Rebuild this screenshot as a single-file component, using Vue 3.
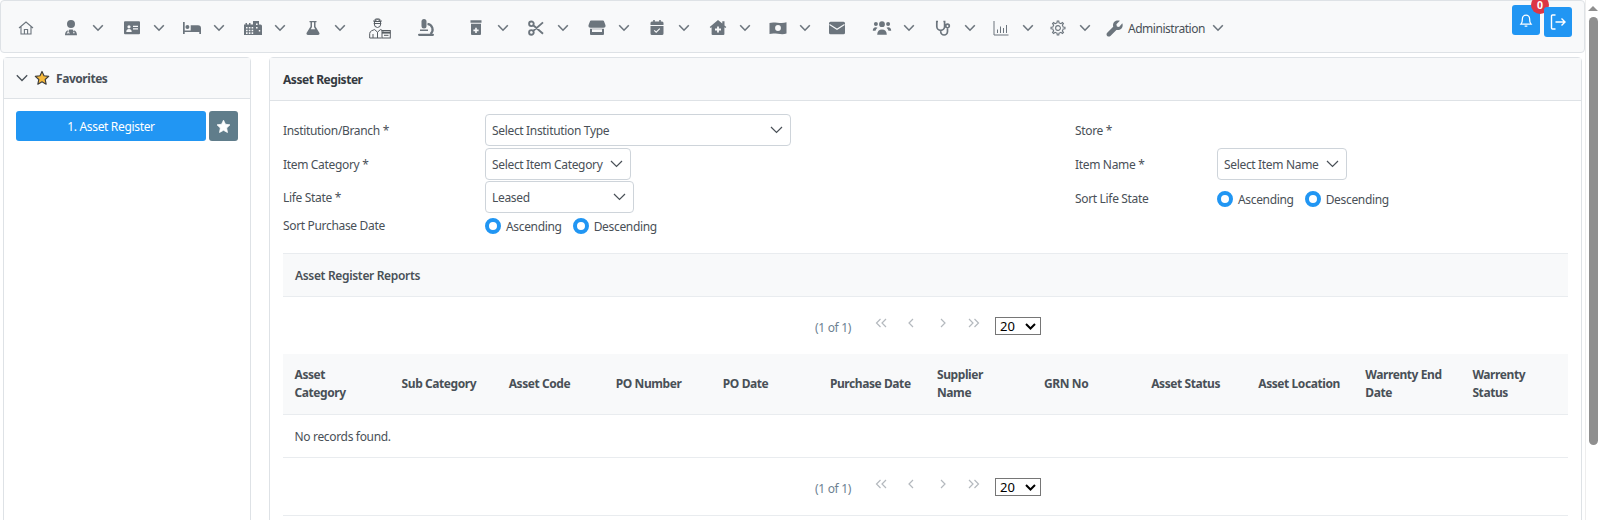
<script setup>
// little helpers for the hand drawn icons
const dot = (x, y, r) => `M${x - r} ${y}a${r} ${r} 0 1 0 ${2 * r} 0a${r} ${r} 0 1 0 ${-2 * r} 0z`
const box = (x, y, w, h) => `M${x} ${y}h${w}v${h}h${-w}z`

function gear(cx, cy, outer, inner, teeth) {
  const pts = []
  for (let i = 0; i < teeth; i++) {
    const a = (i / teeth) * Math.PI * 2
    const step = (Math.PI * 2) / teeth
    const ring = [
      [inner, a - step * 0.5],
      [inner, a - step * 0.24],
      [outer, a - step * 0.14],
      [outer, a + step * 0.14],
      [inner, a + step * 0.24]
    ]
    ring.forEach(([r, t]) => pts.push(`${(cx + r * Math.sin(t)).toFixed(2)} ${(cy - r * Math.cos(t)).toFixed(2)}`))
  }
  return 'M' + pts.join('L') + 'z'
}

// f = filled, s = grey stroke, w = white detail on top
const icons = {
  home: { s: 'M3 10l7-6 7 6M5 8.500V16h10V8.500M8.400 16v-4.500h3.200V16', sw: 1.1 },
  doctor: {
    f: dot(10, 6, 4) + 'M4 17.200c0-3.700 2.400-5.800 6-5.800s6 2.100 6 5.800z',
    w: 'M7.200 11.800v2M12.800 11.800v1.500M6.200 15.500a1 1 0 0 1 2 0M12 14.800h1.600'
  },
  card: {
    f: 'M3 3.200h14a1 1 0 0 1 1 1v11a1 1 0 0 1-1 1H3a1 1 0 0 1-1-1v-11a1 1 0 0 1 1-1z' +
      dot(7, 8.800, 1.600) + 'M4.300 14c0-2 1.100-2.900 2.700-2.900s2.700.9 2.700 2.900z' + box(11, 7.800, 5, 1.100) + box(11, 10.300, 5, 1.100)
  },
  bed: { f: 'M1 4h1.700v8.500h6V7.300H16a3 3 0 0 1 3 3V16h-1.700v-2H2.700v2H1z' + dot(5.400, 9, 2) },
  building: {
    f: 'M1 6.500h1.500V5H4v1.500h2V5h1.500v1.500H10V3h6v3.500h1.500a1.500 1.500 0 0 1 1.500 1.500v9H1z' +
      [3, 5.800, 8.600].map(x => [9, 11.700, 14.300].map(y => box(x, y, 1.600, 1.600)).join('')).join('') +
      box(13, 5.500, 1.600, 1.600) + box(13, 9, 1.600, 1.600) + box(15.800, 12, 1.400, 1.600)
  },
  flask: { f: 'M6.500 3h7v1.300h-1v4.300l3.800 6.200c.7 1.200-.1 2.200-1.300 2.200H5c-1.200 0-2-1-1.300-2.200l3.800-6.200V4.300h-1zM9 4.300v4.700l-1.200 2.200h4.400L11 9V4.300z' },
  bottle: { f: 'M4.500 2.200h11v2.600h-11zM5 5.800h10V16a1 1 0 0 1-1 1H6a1 1 0 0 1-1-1zM9.200 9.800v1.800H7.400v1.700h1.800v1.800h1.600v-1.800h1.800v-1.700h-1.800V9.800z' },
  scissors: {
    s: dot(5.400, 5.800, 2.300) + dot(5.400, 14.400, 2.300) + 'M7.300 7.300l9.700 8.500M7.300 12.900l9.700-8.500',
    sw: 1.9
  },
  store: {
    f: 'M4 2.500h12a1 1 0 0 1 .9.600l1.600 4.200a2.200 2.200 0 0 1-2.200 2.500H3.700a2.200 2.200 0 0 1-2.200-2.500l1.600-4.200a1 1 0 0 1 .9-.6zM3 10.800h14V16a1 1 0 0 1-1 1H4a1 1 0 0 1-1-1zM5 11.200v2.700h10v-2.700z'
  },
  calendar: {
    f: 'M6.200 2h1.600v1.600h4.400V2h1.600v1.600H15a1.500 1.500 0 0 1 1.500 1.500V7h-13V5.100A1.500 1.500 0 0 1 5 3.600h1.200zM3.500 8h13v7.500A1.500 1.500 0 0 1 15 17H5a1.500 1.500 0 0 1-1.500-1.500z',
    w: 'M7.200 12.300l2 1.900 3.600-3.600'
  },
  houseMed: {
    f: 'M10 2l4.300 3.600V3.200h2.200v4.300L18.300 9l-.9 1.100-1-.8V16a1 1 0 0 1-1 1H4.600a1 1 0 0 1-1-1V9.300l-1 .8L1.700 9zM9.100 8.500v2.100H7v1.800h2.100v2.100h1.800v-2.100H13v-1.800h-2.100V8.500z'
  },
  money: {
    f: 'M1.500 5c5-1.800 11 1.400 17-.7v11.200c-5.500 2-12-1.400-17 .6z' + dot(10, 10, 2.900),
    w: 'M4 7.500v.1M16 12.500v.1'
  },
  envelope: {
    f: 'M3.500 3.800h13A1.500 1.500 0 0 1 18 5.300v9.400a1.500 1.500 0 0 1-1.500 1.500h-13A1.500 1.500 0 0 1 2 14.700V5.300a1.500 1.500 0 0 1 1.500-1.500z',
    w: 'M2.500 6.500L10 11.300l7.500-4.800'
  },
  users: {
    f: dot(10, 6.200, 2.900) + dot(3.900, 6, 2) + dot(16.100, 6, 2) +
      'M5.200 16.800c0-3.600 1.900-5.400 4.800-5.400s4.800 1.800 4.800 5.400zM.8 12.800c0-2.400 1.100-3.600 3-3.600.7 0 1.200.2 1.700.5-1.100 1-1.800 2-2 3.100zM19.200 12.800c0-2.400-1.100-3.600-3-3.600-.7 0-1.200.2-1.700.5 1.100 1 1.800 2 2 3.100z'
  },
  stethoscope: {
    s: 'M5 3.500H3.800V8.500a3.900 3.900 0 0 0 7.800 0V3.500H10.400M7.700 12.400v1.200a3.400 3.400 0 0 0 6.800 0V10' + dot(14.500, 8, 1.800),
    sw: 1.700
  },
  chart: { s: 'M3 3v14h14.500M6.500 15v-3.500M9.500 15V8.500M12.500 15v-5M15.500 15V7', sw: 1 },
  gear: { s: gear(10, 10, 7, 5.200, 8) + dot(10, 10, 2.400), sw: 1.100 },
  wrench: {
    f: 'M17.300 5.200c.8 2 .4 4.100-1 5.500-1.300 1.300-3.200 1.700-4.900 1.200l-6 6c-.9.9-2.300.9-3.200 0-.9-.9-.9-2.300 0-3.200l6-6c-.5-1.700-.1-3.600 1.200-4.900 1.400-1.400 3.500-1.800 5.500-1L11.400 6.300l.5 2.200 2.200.5z'
  }
}

const menuSource = [
  { icon: 'home', at: 26 },
  { icon: 'doctor', at: 71, chev: true },
  { icon: 'card', at: 132, chev: true },
  { icon: 'bed', at: 192, chev: true },
  { icon: 'building', at: 253, chev: true },
  { icon: 'flask', at: 313, chev: true },
  { icon: 'staff', at: 380 },
  { icon: 'scope', at: 426 },
  { icon: 'bottle', at: 476, chev: true },
  { icon: 'scissors', at: 536, chev: true },
  { icon: 'store', at: 597, chev: true },
  { icon: 'calendar', at: 657, chev: true },
  { icon: 'houseMed', at: 718, chev: true },
  { icon: 'money', at: 778, chev: true },
  { icon: 'envelope', at: 837 },
  { icon: 'users', at: 882, chev: true },
  { icon: 'stethoscope', at: 943, chev: true },
  { icon: 'chart', at: 1001, chev: true },
  { icon: 'gear', at: 1058, chev: true },
  { icon: 'wrench', at: 1115 }
]

// each cell runs up to the next icon's centre
const menu = menuSource.slice(0, -1).map((m, i) => ({ ...m, width: menuSource[i + 1].at - m.at }))

const columns = [
  'Asset\nCategory', 'Sub Category', 'Asset Code', 'PO Number', 'PO Date', 'Purchase Date',
  'Supplier\nName', 'GRN No', 'Asset Status', 'Asset Location', 'Warrenty End\nDate', 'Warrenty\nStatus'
]
</script>

<template>
  <div class="page">
    <div class="content">
      <header class="topbar">
        <nav class="menu">
          <div v-for="m in menu" :key="m.icon" class="menu-item" :style="{ width: m.width + 'px' }">
            <span class="icon-cell">
              <svg v-if="m.icon === 'staff'" class="staff" width="22" height="22" viewBox="0 0 22 22" fill="none" stroke="#555b61" stroke-width="1">
                <ellipse cx="8.500" cy="6.500" rx="3.300" ry="4" />
                <path d="M4.800 4.500c0-3.600 7.400-3.600 7.400 0zM5 6.500h7" />
                <path d="M.7 21v-4.500c0-2.400 3-3.300 5-3.900l2.800 2.600 2.800-2.600c1.400.4 2.500.9 3.200 1.600M.7 21h11.800M4 21v-4M8.500 15.200V21" />
                <rect x="13" y="13.500" width="8.300" height="7.500" />
                <path d="M13 15.600h8.300" stroke-width="2" />
                <path d="M15 18.300h4.500" />
              </svg>
              <svg v-else-if="m.icon === 'scope'" width="20" height="20" viewBox="0 0 20 20" class="svg-grey">
                <rect x="5.500" y="1" width="5" height="9.500" rx="2.500" />
                <rect x="4" y="11.500" width="8" height="1.500" />
                <path d="M11.500 5.800a5.800 5.800 0 0 1 3 10.200" fill="none" stroke="#6c757d" stroke-width="2.200" />
                <rect x="2" y="15.700" width="16" height="2.200" rx="1.100" />
              </svg>
              <svg v-else width="20" height="20" viewBox="0 0 20 20" class="svg-grey">
                <path v-if="icons[m.icon].f" :d="icons[m.icon].f" fill-rule="evenodd" />
                <path v-if="icons[m.icon].s" :d="icons[m.icon].s" class="line" :stroke-width="icons[m.icon].sw" />
                <path v-if="icons[m.icon].w" :d="icons[m.icon].w" class="white" />
              </svg>
            </span>
            <svg v-if="m.chev" class="chev" width="12" height="8" viewBox="0 0 12 8"><path d="M1.200 1.300L6 6.200l4.800-4.900" /></svg>
          </div>
          <div class="menu-item admin">
            <span class="icon-cell">
              <svg width="20" height="20" viewBox="0 0 20 20" class="svg-grey"><path :d="icons.wrench.f" /></svg>
            </span>
            <span class="admin-text">Administration</span>
            <svg class="chev" width="12" height="8" viewBox="0 0 12 8"><path d="M1.200 1.300L6 6.200l4.800-4.900" /></svg>
          </div>
        </nav>

        <div class="top-actions">
          <button class="top-btn">
            <svg width="18" height="18" viewBox="0 0 20 20" fill="none" stroke="#fff" stroke-width="1.400">
              <path d="M4.500 14.500c1.200-1.300 1.500-3 1.500-6a4 4 0 0 1 8 0c0 3 .3 4.700 1.500 6zM8.500 16.800h3" />
            </svg>
            <span class="badge">0</span>
          </button>
          <button class="top-btn logout">
            <svg width="20" height="20" viewBox="0 0 20 20" fill="none" stroke="#fff" stroke-width="1.400">
              <path d="M7.500 3H4.500a1 1 0 0 0-1 1v12a1 1 0 0 0 1 1h3M7.500 10h9.500M13.500 6.500L17 10l-3.500 3.500" />
            </svg>
          </button>
        </div>
      </header>

      <div class="columns">
        <aside class="panel favorites">
          <div class="panel-head fav-head">
            <svg class="fav-chev" width="12" height="8" viewBox="0 0 12 8"><path d="M.8 1.200L6 6.500l5.200-5.300" /></svg>
            <svg width="16" height="16" viewBox="0 0 20 20"><path d="M10 1.800l2.500 5.400 5.900.7-4.400 4 1.200 5.800L10 14.800l-5.200 2.900L6 11.900l-4.400-4 5.900-.7z" fill="#f6b93b" stroke="#3a3a3a" stroke-width="1.400" stroke-linejoin="round" /></svg>
            <span>Favorites</span>
          </div>
          <div class="fav-body">
            <button class="fav-btn">1. Asset Register</button>
            <button class="fav-star">
              <svg width="15" height="15" viewBox="0 0 20 20"><path d="M10 1.500l2.600 5.500 6 .8-4.400 4.200 1.100 6L10 15.100 4.700 18l1.100-6L1.400 7.800l6-.8z" fill="#fff" stroke="#fff" stroke-linejoin="round" /></svg>
            </button>
          </div>
        </aside>

        <main class="panel register">
          <div class="panel-head reg-head">Asset Register</div>
          <div class="reg-body">
            <div class="form-grid">
              <label>Institution/Branch <span class="req">*</span></label>
              <div class="dropdown dd-type"><span>Select Institution Type</span><svg class="dd-chev" width="13" height="8" viewBox="0 0 13 8"><path d="M1 1l5.500 5.500L12 1" /></svg></div>
              <label>Store <span class="req">*</span></label>
              <div></div>

              <label>Item Category <span class="req">*</span></label>
              <div class="dropdown dd-cat"><span>Select Item Category</span><svg class="dd-chev" width="13" height="8" viewBox="0 0 13 8"><path d="M1 1l5.500 5.500L12 1" /></svg></div>
              <label>Item Name <span class="req">*</span></label>
              <div class="dropdown dd-item"><span>Select Item Name</span><svg class="dd-chev" width="13" height="8" viewBox="0 0 13 8"><path d="M1 1l5.500 5.500L12 1" /></svg></div>

              <label>Life State <span class="req">*</span></label>
              <div class="dropdown dd-life"><span>Leased</span><svg class="dd-chev" width="13" height="8" viewBox="0 0 13 8"><path d="M1 1l5.500 5.500L12 1" /></svg></div>
              <label class="life-label">Sort Life State</label>
              <div class="radios life-radios">
                <span class="radio"></span><span class="radio-label">Ascending</span>
                <span class="radio second"></span><span class="radio-label">Descending</span>
              </div>

              <label class="sort-label">Sort Purchase Date</label>
              <div class="radios sort-radios">
                <span class="radio"></span><span class="radio-label">Ascending</span>
                <span class="radio second"></span><span class="radio-label">Descending</span>
              </div>
            </div>

            <div class="sub-head">Asset Register Reports</div>

            <div class="pager pager-top">
              <span class="pager-text">(1 of 1)</span>
              <svg class="nav first" width="16" height="10" viewBox="0 0 16 10"><path d="M6.500 1L2.500 5l4 4M12 1L8 5l4 4" /></svg>
              <svg class="nav prev" width="10" height="10" viewBox="0 0 10 10"><path d="M7 1L3 5l4 4" /></svg>
              <svg class="nav next" width="10" height="10" viewBox="0 0 10 10"><path d="M3 1l4 4-4 4" /></svg>
              <svg class="nav last" width="16" height="10" viewBox="0 0 16 10"><path d="M4 1l4 4-4 4M9.500 1l4 4-4 4" /></svg>
              <div class="rows"><span>20</span><svg width="11" height="7" viewBox="0 0 11 7"><path d="M1 1l4.500 4.500L10 1" /></svg></div>
            </div>

            <div class="table-head">
              <div v-for="c in columns" :key="c" class="th">{{ c }}</div>
            </div>
            <div class="empty-row">No records found.</div>

            <div class="pager pager-bottom">
              <span class="pager-text">(1 of 1)</span>
              <svg class="nav first" width="16" height="10" viewBox="0 0 16 10"><path d="M6.500 1L2.500 5l4 4M12 1L8 5l4 4" /></svg>
              <svg class="nav prev" width="10" height="10" viewBox="0 0 10 10"><path d="M7 1L3 5l4 4" /></svg>
              <svg class="nav next" width="10" height="10" viewBox="0 0 10 10"><path d="M3 1l4 4-4 4" /></svg>
              <svg class="nav last" width="16" height="10" viewBox="0 0 16 10"><path d="M4 1l4 4-4 4M9.500 1l4 4-4 4" /></svg>
              <div class="rows"><span>20</span><svg width="11" height="7" viewBox="0 0 11 7"><path d="M1 1l4.500 4.500L10 1" /></svg></div>
            </div>
          </div>
        </main>
      </div>
    </div>

    <div class="scrollbar">
      <span class="arrow"></span>
      <span class="thumb"></span>
    </div>
  </div>
</template>

<style>
html, body {
  margin: 0;
  background: #fff;
  overflow: hidden;
}
</style>

<style scoped>
.page {
  display: flex;
  height: 520px;
  overflow: hidden;
  font-family: "Noto Sans", "Open Sans", sans-serif;
  font-size: 12px;
  letter-spacing: -0.33px;
  color: #495057;
}

.content {
  width: 1585px;
  flex: none;
}

.topbar {
  height: 53px;
  box-sizing: border-box;
  border: 1px solid #dee2e6;
  border-radius: 4px;
  background: #f8f9fa;
  display: flex;
  justify-content: space-between;
}

.menu {
  display: flex;
  align-items: center;
  padding-left: 15px;
  margin-top: 3px;
}

.menu-item {
  display: flex;
  align-items: center;
  flex: none;
  height: 24px;
}

.icon-cell {
  width: 20px;
  height: 20px;
  display: flex;
  justify-content: center;
  flex: none;
}

.staff {
  flex: none;
  margin-top: -1px;
}

.svg-grey {
  fill: #6c757d;
}

.line {
  fill: none;
  stroke: #6c757d;
}

.white {
  fill: none;
  stroke: #f8f9fa;
  stroke-width: 1.1;
}

.chev {
  margin-left: 11px;
  flex: none;
  fill: none;
  stroke: #6c757d;
  stroke-width: 1.600;
}

.admin {
  width: auto;
}

.admin-text {
  margin-left: 3px;
  letter-spacing: -0.47px;
  color: #495057;
}

.admin .chev {
  margin-left: 7px;
}

.top-actions {
  display: flex;
  gap: 4px;
  padding: 4px 12px 0 0;
  align-items: flex-start;
}

.top-btn {
  position: relative;
  width: 28px;
  height: 30px;
  padding: 0;
  border: none;
  border-radius: 3px;
  background: #2196f3;
  display: flex;
  align-items: center;
  justify-content: center;
}

.logout {
  margin-top: 2px;
}

.badge {
  position: absolute;
  top: -9px;
  right: -9px;
  width: 18px;
  height: 18px;
  border-radius: 50%;
  background: #dc3545;
  color: #fff;
  font-size: 10.500px;
  font-weight: 700;
  line-height: 18px;
  text-align: center;
  letter-spacing: 0;
  font-family: "Noto Sans", sans-serif;
}

.columns {
  display: flex;
  gap: 18px;
  padding: 4px 3px 0 3px;
}

.panel {
  border: 1px solid #dee2e6;
  border-radius: 4px 4px 0 0;
  box-sizing: border-box;
  background: #fff;
  height: 520px;
}

.favorites {
  width: 248px;
  flex: none;
}

.register {
  flex: 1;
  min-width: 0;
}

.panel-head {
  background: #f8f9fa;
  border-bottom: 1px solid #dee2e6;
  font-weight: 700;
  letter-spacing: -0.45px;
  color: #343a40;
  display: flex;
  align-items: center;
}

.fav-head {
  height: 41px;
  padding-left: 12px;
  gap: 6px;
  box-sizing: border-box;
  color: #495057;
}

.fav-chev {
  fill: none;
  stroke: #495057;
  stroke-width: 1.300;
}

.fav-body {
  display: flex;
  gap: 3px;
  padding: 12px 0 0 12px;
}

.fav-btn {
  width: 190px;
  height: 30px;
  border: none;
  border-radius: 3px;
  background: #2196f3;
  color: #fff;
  font: inherit;
  letter-spacing: inherit;
}

.fav-star {
  width: 29px;
  height: 30px;
  padding: 0;
  border: none;
  border-radius: 3px;
  background: #607d8b;
  display: flex;
  align-items: center;
  justify-content: center;
}

.reg-head {
  height: 43px;
  padding-left: 13px;
  box-sizing: border-box;
}

.reg-body {
  padding: 13px 13px 0 13px;
}

.form-grid {
  display: grid;
  grid-template-columns: 202px 590px 142px 1fr;
  grid-template-rows: 34px 33px 32px 39px;
  align-items: start;
}

.form-grid label {
  height: 32px;
  display: block;
  line-height: 34px;
  white-space: pre;
}

.dropdown {
  height: 32px;
  box-sizing: border-box;
  border: 1px solid #ced4da;
  border-radius: 4px;
  background: #fff;
  padding-left: 6px;
  display: flex;
  align-items: center;
  justify-content: space-between;
}

.dd-chev {
  fill: none;
  stroke: #495057;
  stroke-width: 1.200;
  margin-right: 7px;
  flex: none;
}

.dd-type { width: 306px; }
.dd-cat { width: 146px; }
.dd-life { width: 149px; }
.dd-item { width: 130px; }

.radios {
  height: 32px;
  display: flex;
  align-items: center;
}

.form-grid .life-label {
  margin-top: 1px;
}

.life-radios {
  margin-top: 2px;
}

.form-grid .sort-label {
  height: 24px;
  line-height: 26px;
}

.sort-radios {
  height: 26px;
}

.radio {
  width: 16px;
  height: 16px;
  box-sizing: border-box;
  border: 4px solid #2196f3;
  border-radius: 50%;
  background: #fff;
  flex: none;
}

.radio-label {
  margin-left: 5px;
}

.radio.second {
  margin-left: 11px;
}

.sub-head {
  height: 44px;
  box-sizing: border-box;
  margin-top: 1px;
  padding-left: 12px;
  background: #f8f9fa;
  border-top: 1px solid #e9ecef;
  border-bottom: 1px solid #e9ecef;
  display: flex;
  align-items: center;
  font-weight: 600;
}

.pager {
  display: flex;
  align-items: center;
  justify-content: center;
  padding-left: 5px;
}

.pager-top {
  height: 57px;
}

.pager-bottom {
  height: 58px;
  border-bottom: 1px solid #e9ecef;
  box-sizing: border-box;
}

.pager-text {
  color: #6c7f92;
  margin-top: 3px;
}

.nav {
  fill: none;
  stroke: #b4b9be;
  stroke-width: 1.200;
  margin-top: -6px;
}

.nav.first { margin-left: 23px; }
.nav.prev { margin-left: 16px; }
.nav.next { margin-left: 22px; }
.nav.last { margin-left: 17px; }

.rows {
  width: 46px;
  height: 18px;
  box-sizing: border-box;
  margin-left: 14px;
  margin-top: 1px;
  padding: 0 4px 0 4px;
  border: 1px solid #767676;
  display: flex;
  align-items: center;
  justify-content: space-between;
  color: #000;
  font-size: 13px;
  letter-spacing: 0;
}

.rows svg {
  fill: none;
  stroke: #000;
  stroke-width: 2;
}

.table-head {
  display: grid;
  grid-template-columns: repeat(12, 1fr);
  height: 61px;
  box-sizing: border-box;
  background: #f8f9fa;
  border-bottom: 1px solid #e9ecef;
  align-items: center;
}

.th {
  padding: 0 0 0 11.500px;
  font-weight: 700;
  letter-spacing: -0.42px;
  line-height: 18px;
  color: #495057;
  white-space: pre-line;
}

.empty-row {
  height: 43px;
  box-sizing: border-box;
  padding-left: 11.500px;
  border-bottom: 1px solid #e9ecef;
  display: flex;
  align-items: center;
}

.scrollbar {
  position: relative;
  flex: 1;
  border-left: 1px solid #eee;
  background: #fff;
}

.arrow {
  position: absolute;
  top: 6px;
  left: 2px;
  border-left: 5px solid transparent;
  border-right: 5px solid transparent;
  border-bottom: 5px solid #8f8f8f;
}

.thumb {
  position: absolute;
  top: 17px;
  left: 3px;
  width: 9px;
  height: 428px;
  border-radius: 5px;
  background: #8f8f8f;
}
</style>
